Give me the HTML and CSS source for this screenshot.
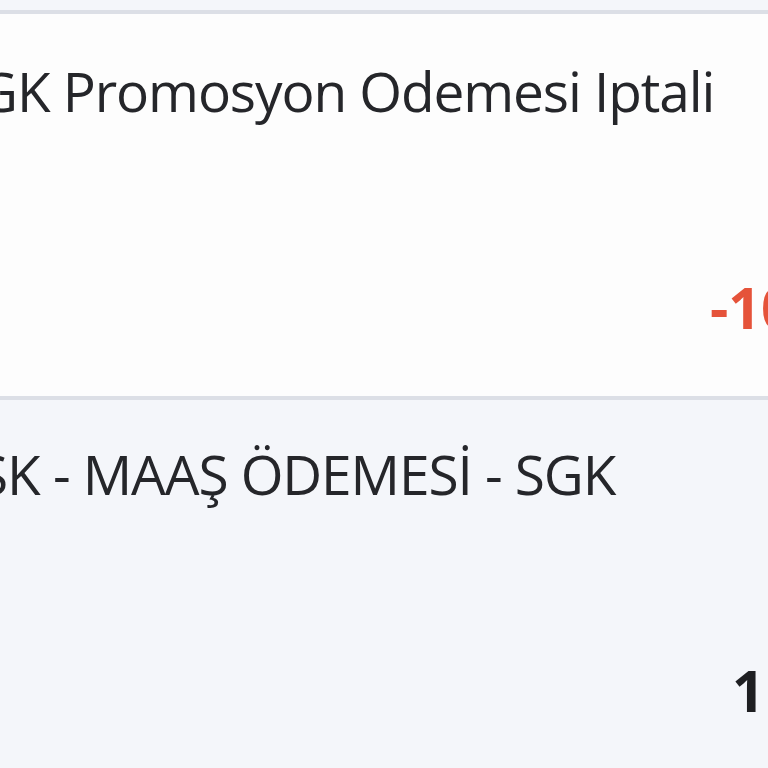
FILE: index.html
```html
<!DOCTYPE html>
<html lang="tr">
<head>
<meta charset="utf-8">
<link rel="stylesheet" href="styles.css">
</head>
<body>
<div class="list">
  <div class="row row-white">
    <div class="title">SGK Promosyon Odemesi Iptali</div>
    <div class="amount neg">-100,00 TL</div>
  </div>
  <div class="row row-grey">
    <div class="title">SSK - MAAŞ ÖDEMESİ - SGK</div>
    <div class="amount pos">1 250,00 TL</div>
  </div>
</div>
</body>
</html>
```

FILE: styles.css
```css
html, body {
  margin: 0;
  padding: 0;
  width: 768px;
  height: 768px;
  overflow: hidden;
  background: #f4f6fa;
}
.list {
  padding-top: 10px;
  font-family: "Open Sans", "Noto Sans", sans-serif;
}
.row {
  border-top: 4px solid #dcdfe6;
  height: 382px;
  box-sizing: content-box;
  display: flex;
  flex-direction: column;
  overflow: hidden;
}
.row-white { background: #fdfdfd; }
.row-grey { background: #f4f6fa; }
.title {
  font-size: 55px;
  letter-spacing: -1.1px;
  color: #25262a;
  white-space: nowrap;
  margin-left: -51px;
  margin-top: 39px;
  line-height: 76px;
}
.row-grey .title { margin-top: 36px; }
.amount {
  font-size: 57px;
  font-weight: 700;
  white-space: nowrap;
  padding-left: 710px;
  margin-top: 140px;
  line-height: 76px;
}
.neg { color: #e5533a; }
.pos { color: #1e1f22; padding-left: 732px; }
```
